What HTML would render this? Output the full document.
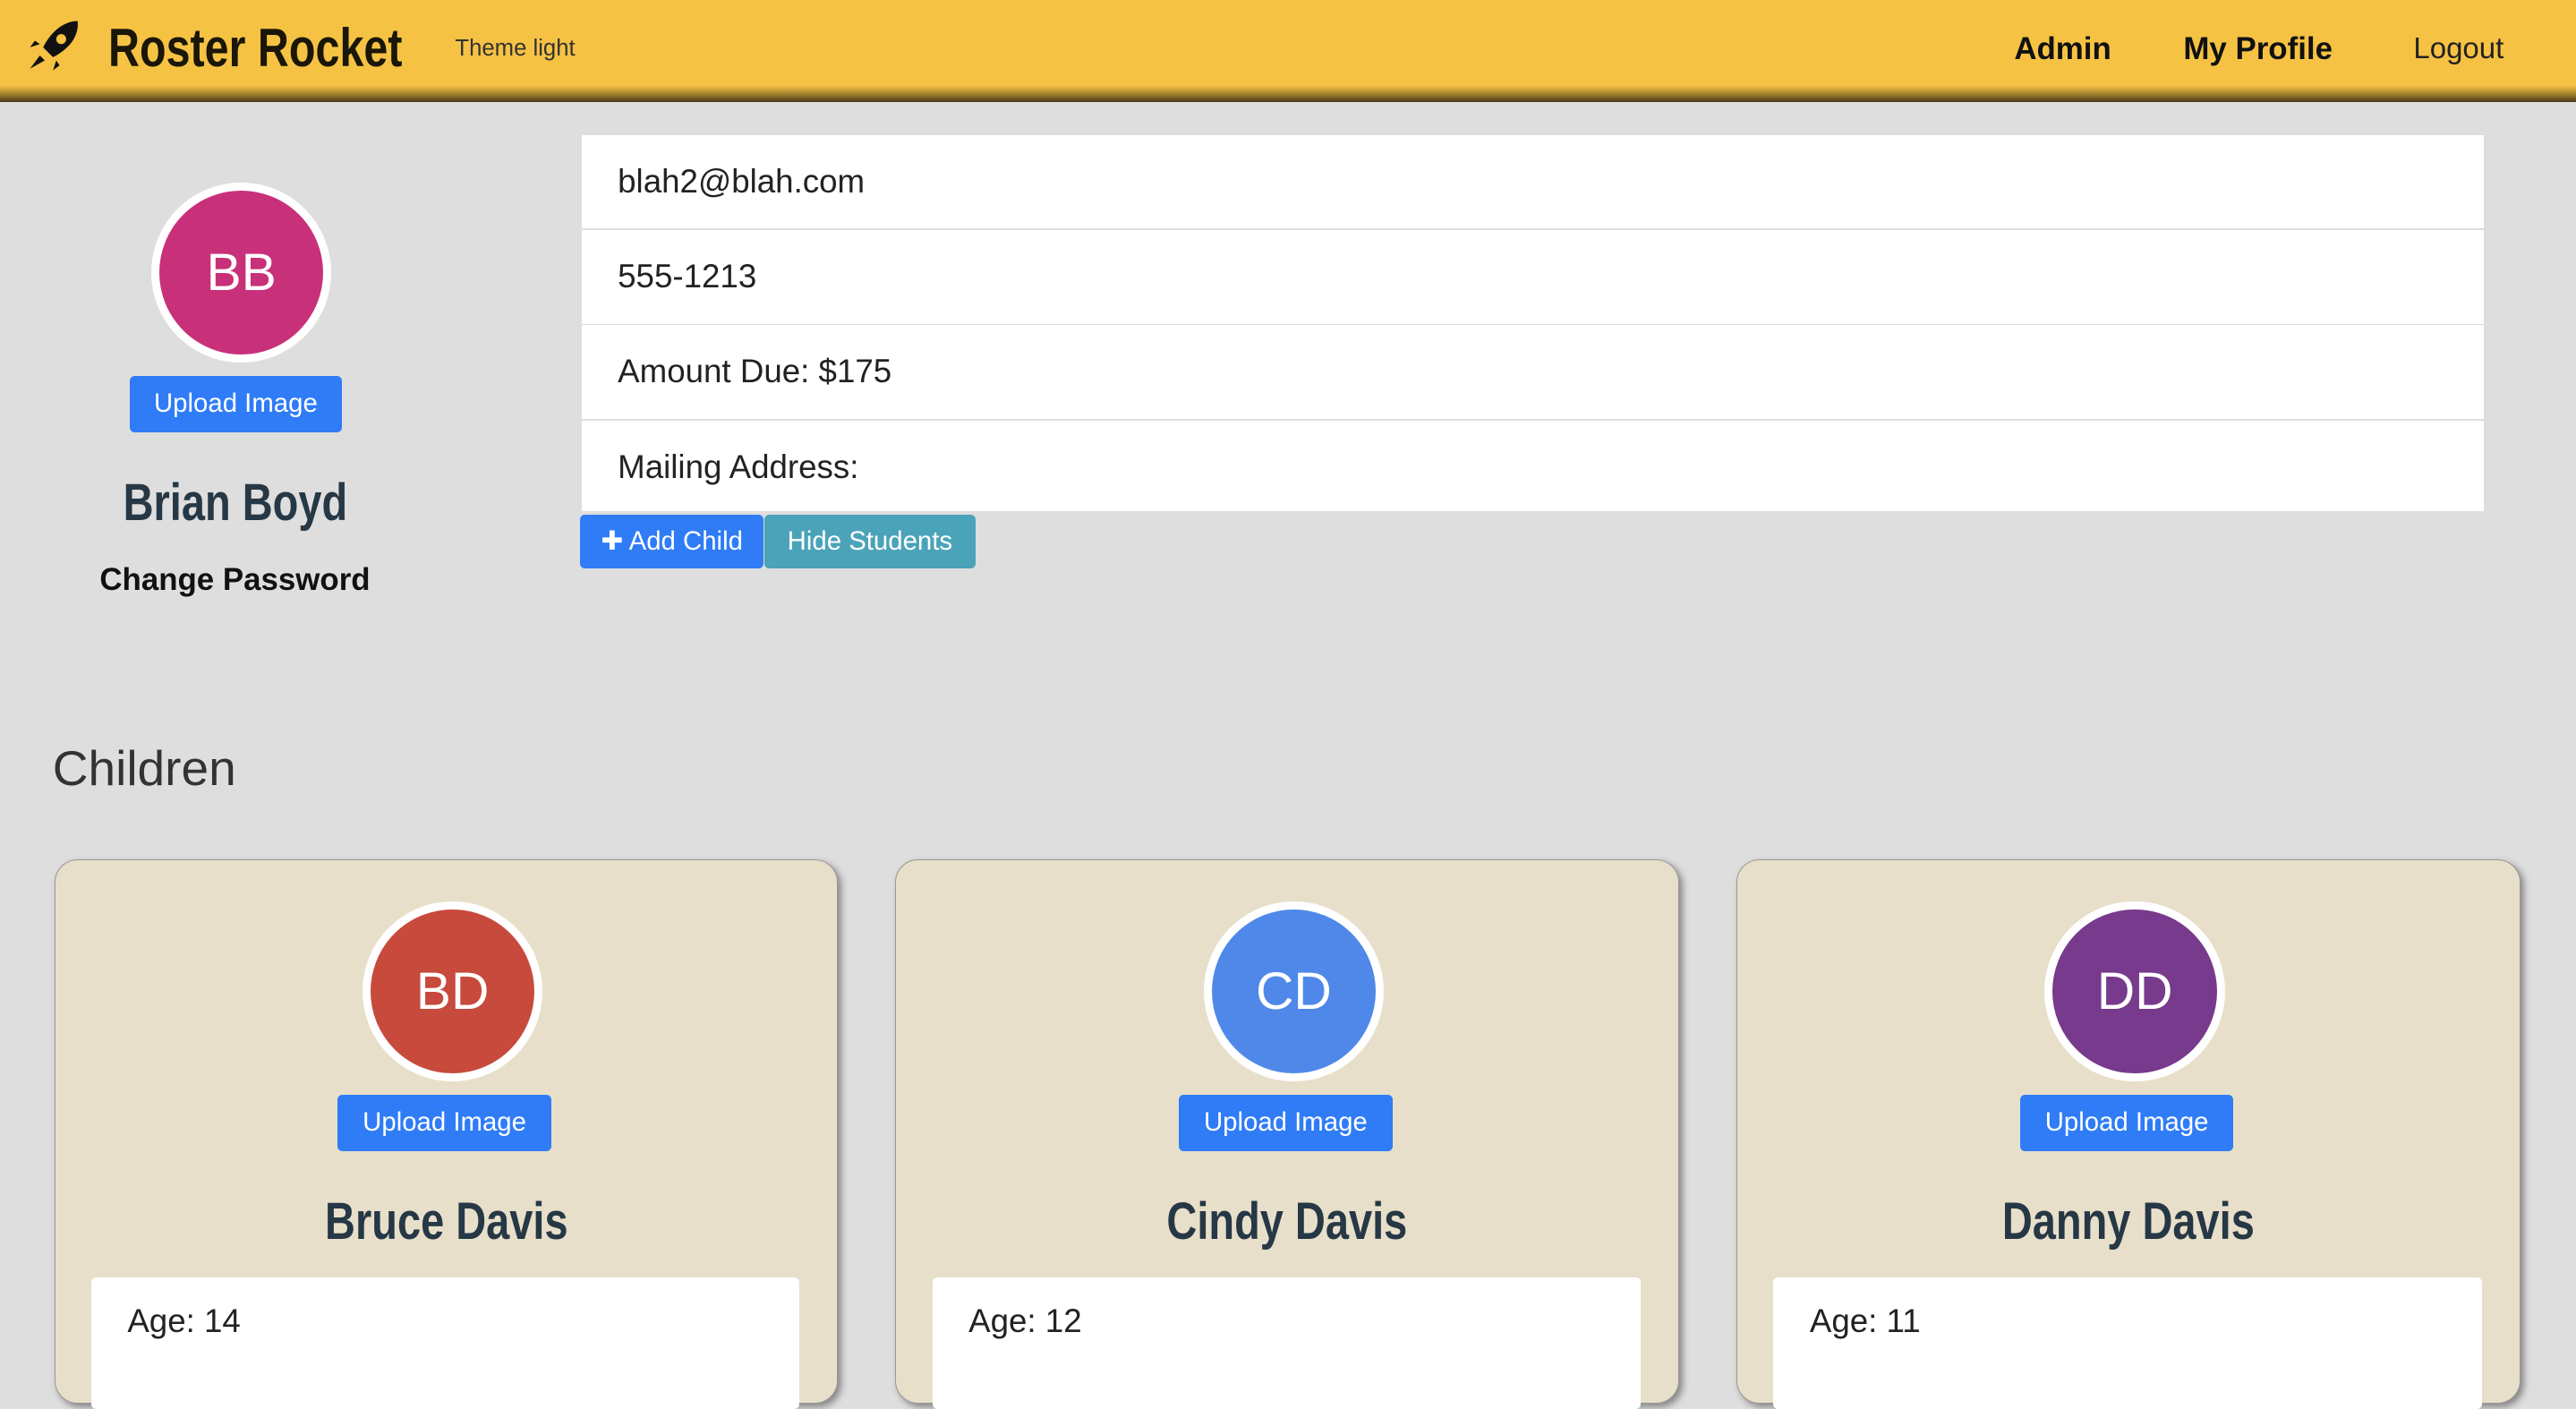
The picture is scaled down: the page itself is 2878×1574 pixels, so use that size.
<!DOCTYPE html>
<html><head><style>
html{zoom:1.8355}
body{margin:0;width:1568px;height:832px;overflow:hidden;background:#dedede;font-family:"Liberation Sans",sans-serif;position:relative;color:#222}
.hdr{position:absolute;left:0;top:0;width:1568px;height:62px;background:linear-gradient(#f5c243 0,#f5c243 52px,#a88530 57px,#4a3c18 62px)}
.abs{position:absolute}
.btn{position:absolute;background:#2f7cf6;color:#fff;font-size:16px;border-radius:3px;text-align:center;line-height:34px;height:34px}
.name{position:absolute;font-weight:bold;color:#263845;font-size:32px;line-height:40px;text-align:center;transform:scaleX(.8);transform-origin:center}
.av{position:absolute;width:100px;height:100px;border-radius:50%;border:5px solid #fff;color:#fff;font-size:32px;text-align:center;line-height:100px}
.list{position:absolute;left:354px;top:82px;width:1158px;height:229px;background:#fff}
.row{height:57px;font-size:20px;line-height:57px;padding-left:22px}
.sep{height:1px;background:#ddd}
.card{position:absolute;top:523px;width:476px;height:330px;background:#e8dfca;border:1px solid #999;border-radius:14px;box-shadow:2px 2px 4px #888}
.box{position:absolute;left:22px;top:254px;width:431px;height:80px;background:#fff;border-radius:3px;font-size:20px;padding:15px 22px;box-sizing:border-box}
</style></head><body>
<div class="hdr">
<svg class="abs" style="left:15px;top:10px" width="36" height="36" viewBox="0 0 36 36"><path d="M32 3 C24 3 16 9 11 19 L17 25 C27 20 33 12 32 3Z" fill="#111"/><circle cx="22" cy="14" r="3" fill="#f5c243"/><path d="M9 17 L3 19 L6 15 Z M19 27 L17 33 L21 30Z M9 24 L3 32 L12 27Z" fill="#111"/></svg>
<div class="abs" style="left:66px;top:10px;font-size:33px;font-weight:bold;color:#1a1608;transform:scaleX(.8);transform-origin:left;white-space:nowrap">Roster Rocket</div>
<div class="abs" style="left:277px;top:22px;font-size:14px;color:#333">Theme light</div>
<div class="abs" style="left:1226px;top:19px;font-size:19px;font-weight:bold;color:#111">Admin</div>
<div class="abs" style="left:1329px;top:19px;font-size:19px;font-weight:bold;color:#111">My Profile</div>
<div class="abs" style="left:1469px;top:19px;font-size:18px;color:#222">Logout</div>
</div>
<div class="av" style="left:92px;top:111px;background:#c8307a">BB</div>
<div class="btn" style="left:79px;top:229px;width:129px">Upload Image</div>
<div class="name" style="left:33px;top:286px;width:220px">Brian Boyd</div>
<div class="abs" style="left:33px;top:342px;width:220px;text-align:center;font-size:19px;font-weight:bold;color:#111">Change Password</div>
<div class="list">
<div class="row">blah2@blah.com</div><div class="sep"></div>
<div class="row">555-1213</div><div class="sep"></div>
<div class="row">Amount Due: $175</div><div class="sep"></div>
<div class="row">Mailing Address:</div>
</div>
<div class="btn" style="left:353px;top:313px;width:112px;height:33px;line-height:33px">✚ Add Child</div>
<div class="btn" style="left:465px;top:313px;width:129px;height:33px;line-height:33px;background:#4aa3b9">Hide Students</div>
<div class="abs" style="left:32px;top:450px;font-size:30px;color:#333">Children</div>

<div class="card" style="left:33px"><div class="av" style="left:187px;top:25px;background:#c74a3d">BD</div><div class="btn" style="left:172px;top:143px;width:130px">Upload Image</div><div class="name" style="left:0;top:200px;width:476px">Bruce Davis</div><div class="box">Age: 14</div></div>
<div class="card" style="left:545px"><div class="av" style="left:187px;top:25px;background:#4f88e8">CD</div><div class="btn" style="left:172px;top:143px;width:130px">Upload Image</div><div class="name" style="left:0;top:200px;width:476px">Cindy Davis</div><div class="box">Age: 12</div></div>
<div class="card" style="left:1057px"><div class="av" style="left:187px;top:25px;background:#773a8c">DD</div><div class="btn" style="left:172px;top:143px;width:130px">Upload Image</div><div class="name" style="left:0;top:200px;width:476px">Danny Davis</div><div class="box">Age: 11</div></div>
</body></html>
